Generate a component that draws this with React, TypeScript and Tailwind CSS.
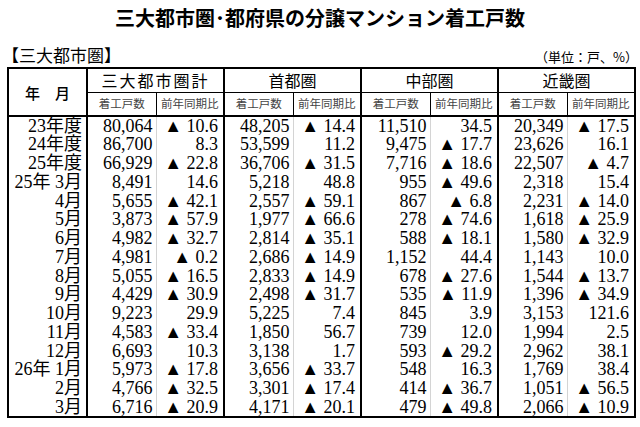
import React from 'react';

const ROWS: string[][] = [
  ['23年度', '80,064', '▲ 10.6', '48,205', '▲ 14.4', '11,510', '34.5', '20,349', '▲ 17.5'],
  ['24年度', '86,700', '8.3', '53,599', '11.2', '9,475', '▲ 17.7', '23,626', '16.1'],
  ['25年度', '66,929', '▲ 22.8', '36,706', '▲ 31.5', '7,716', '▲ 18.6', '22,507', '▲ 4.7'],
  ['25年 3月', '8,491', '14.6', '5,218', '48.8', '955', '▲ 49.6', '2,318', '15.4'],
  ['4月', '5,655', '▲ 42.1', '2,557', '▲ 59.1', '867', '▲ 6.8', '2,231', '▲ 14.0'],
  ['5月', '3,873', '▲ 57.9', '1,977', '▲ 66.6', '278', '▲ 74.6', '1,618', '▲ 25.9'],
  ['6月', '4,982', '▲ 32.7', '2,814', '▲ 35.1', '588', '▲ 18.1', '1,580', '▲ 32.9'],
  ['7月', '4,981', '▲ 0.2', '2,686', '▲ 14.9', '1,152', '44.4', '1,143', '10.0'],
  ['8月', '5,055', '▲ 16.5', '2,833', '▲ 14.9', '678', '▲ 27.6', '1,544', '▲ 13.7'],
  ['9月', '4,429', '▲ 30.9', '2,498', '▲ 31.7', '535', '▲ 11.9', '1,396', '▲ 34.9'],
  ['10月', '9,223', '29.9', '5,225', '7.4', '845', '3.9', '3,153', '121.6'],
  ['11月', '4,583', '▲ 33.4', '1,850', '56.7', '739', '12.0', '1,994', '2.5'],
  ['12月', '6,693', '10.3', '3,138', '1.7', '593', '▲ 29.2', '2,962', '38.1'],
  ['26年 1月', '5,973', '▲ 17.8', '3,656', '▲ 33.7', '548', '16.3', '1,769', '38.4'],
  ['2月', '4,766', '▲ 32.5', '3,301', '▲ 17.4', '414', '▲ 36.7', '1,051', '▲ 56.5'],
  ['3月', '6,716', '▲ 20.9', '4,171', '▲ 20.1', '479', '▲ 49.8', '2,066', '▲ 10.9'],
];

const GROUPS = ['三大都市圏計', '首都圏', '中部圏', '近畿圏'];

const gothic = "font-['Noto_Sans_CJK_JP',sans-serif]";
const serif = "font-['Liberation_Serif','Noto_Sans_CJK_JP',serif]";

export default function App() {
  return (
    <div className={`w-[640px] h-[427px] bg-white text-black overflow-hidden ${gothic}`}>
      {/* Title */}
      <h1 className="pt-[5px] text-center text-[20px] font-bold leading-[26px]">
        三大都市圏･都府県の分譲マンション着工戸数
      </h1>

      <div className="flex justify-between items-end pl-[2px] pr-[2px] mt-[11px] h-[24px]">
        <span className="text-[17px] leading-[22px]">【三大都市圏】</span>
        <span className="text-[13px] leading-[18px]">（単位：戸、%）</span>
      </div>

      {/* Table */}
      <table className="ml-[7px] mt-[1px] w-[627px] table-fixed border-collapse border-2 border-black">
        <colgroup>
          <col className="w-[79px]" />
          {GROUPS.map((g) => (
            <React.Fragment key={g}>
              <col className="w-[69px]" />
              <col className="w-[68px]" />
            </React.Fragment>
          ))}
        </colgroup>
        <thead>
          <tr className="h-[24px]">
            <th
              rowSpan={2}
              className="border-r-2 border-b-2 border-black text-[15px] font-medium leading-none"
            >
              年　月
            </th>
            {GROUPS.map((g, i) => (
              <th
                key={g}
                colSpan={2}
                className={`border-l-2 border-r-2 border-b border-black text-[16px] font-normal leading-none ${
                  i === 0 ? 'tracking-[2px]' : ''
                }`}
              >
                {g}
              </th>
            ))}
          </tr>
          <tr className="h-[24px]">
            {GROUPS.map((g) => (
              <React.Fragment key={g}>
                <th className="border-l-2 border-r border-b-2 border-black text-[11.5px] font-normal text-[#444] leading-none">
                  着工戸数
                </th>
                <th className="border-r-2 border-b-2 border-black text-[11.5px] font-normal text-[#444] leading-none">
                  前年同期比
                </th>
              </React.Fragment>
            ))}
          </tr>
        </thead>
        <tbody className={`${serif} text-[18px] leading-[18px]`}>
          {ROWS.map((row) => (
            <tr key={row[0]} className="h-[18.75px]">
              <td className="border-r-2 border-black text-right pr-[4px] whitespace-pre">{row[0]}</td>
              {row.slice(1).map((v, j) => (
                <td
                  key={j}
                  className={`text-right whitespace-pre ${
                    j % 2 === 0
                      ? 'border-l-2 border-r border-l-black border-r-[#d4d4d4] pr-[3px]'
                      : 'border-r-2 border-black pr-[5px]'
                  }`}
                >
                  {v}
                </td>
              ))}
            </tr>
          ))}
        </tbody>
      </table>
    </div>
  );
}
